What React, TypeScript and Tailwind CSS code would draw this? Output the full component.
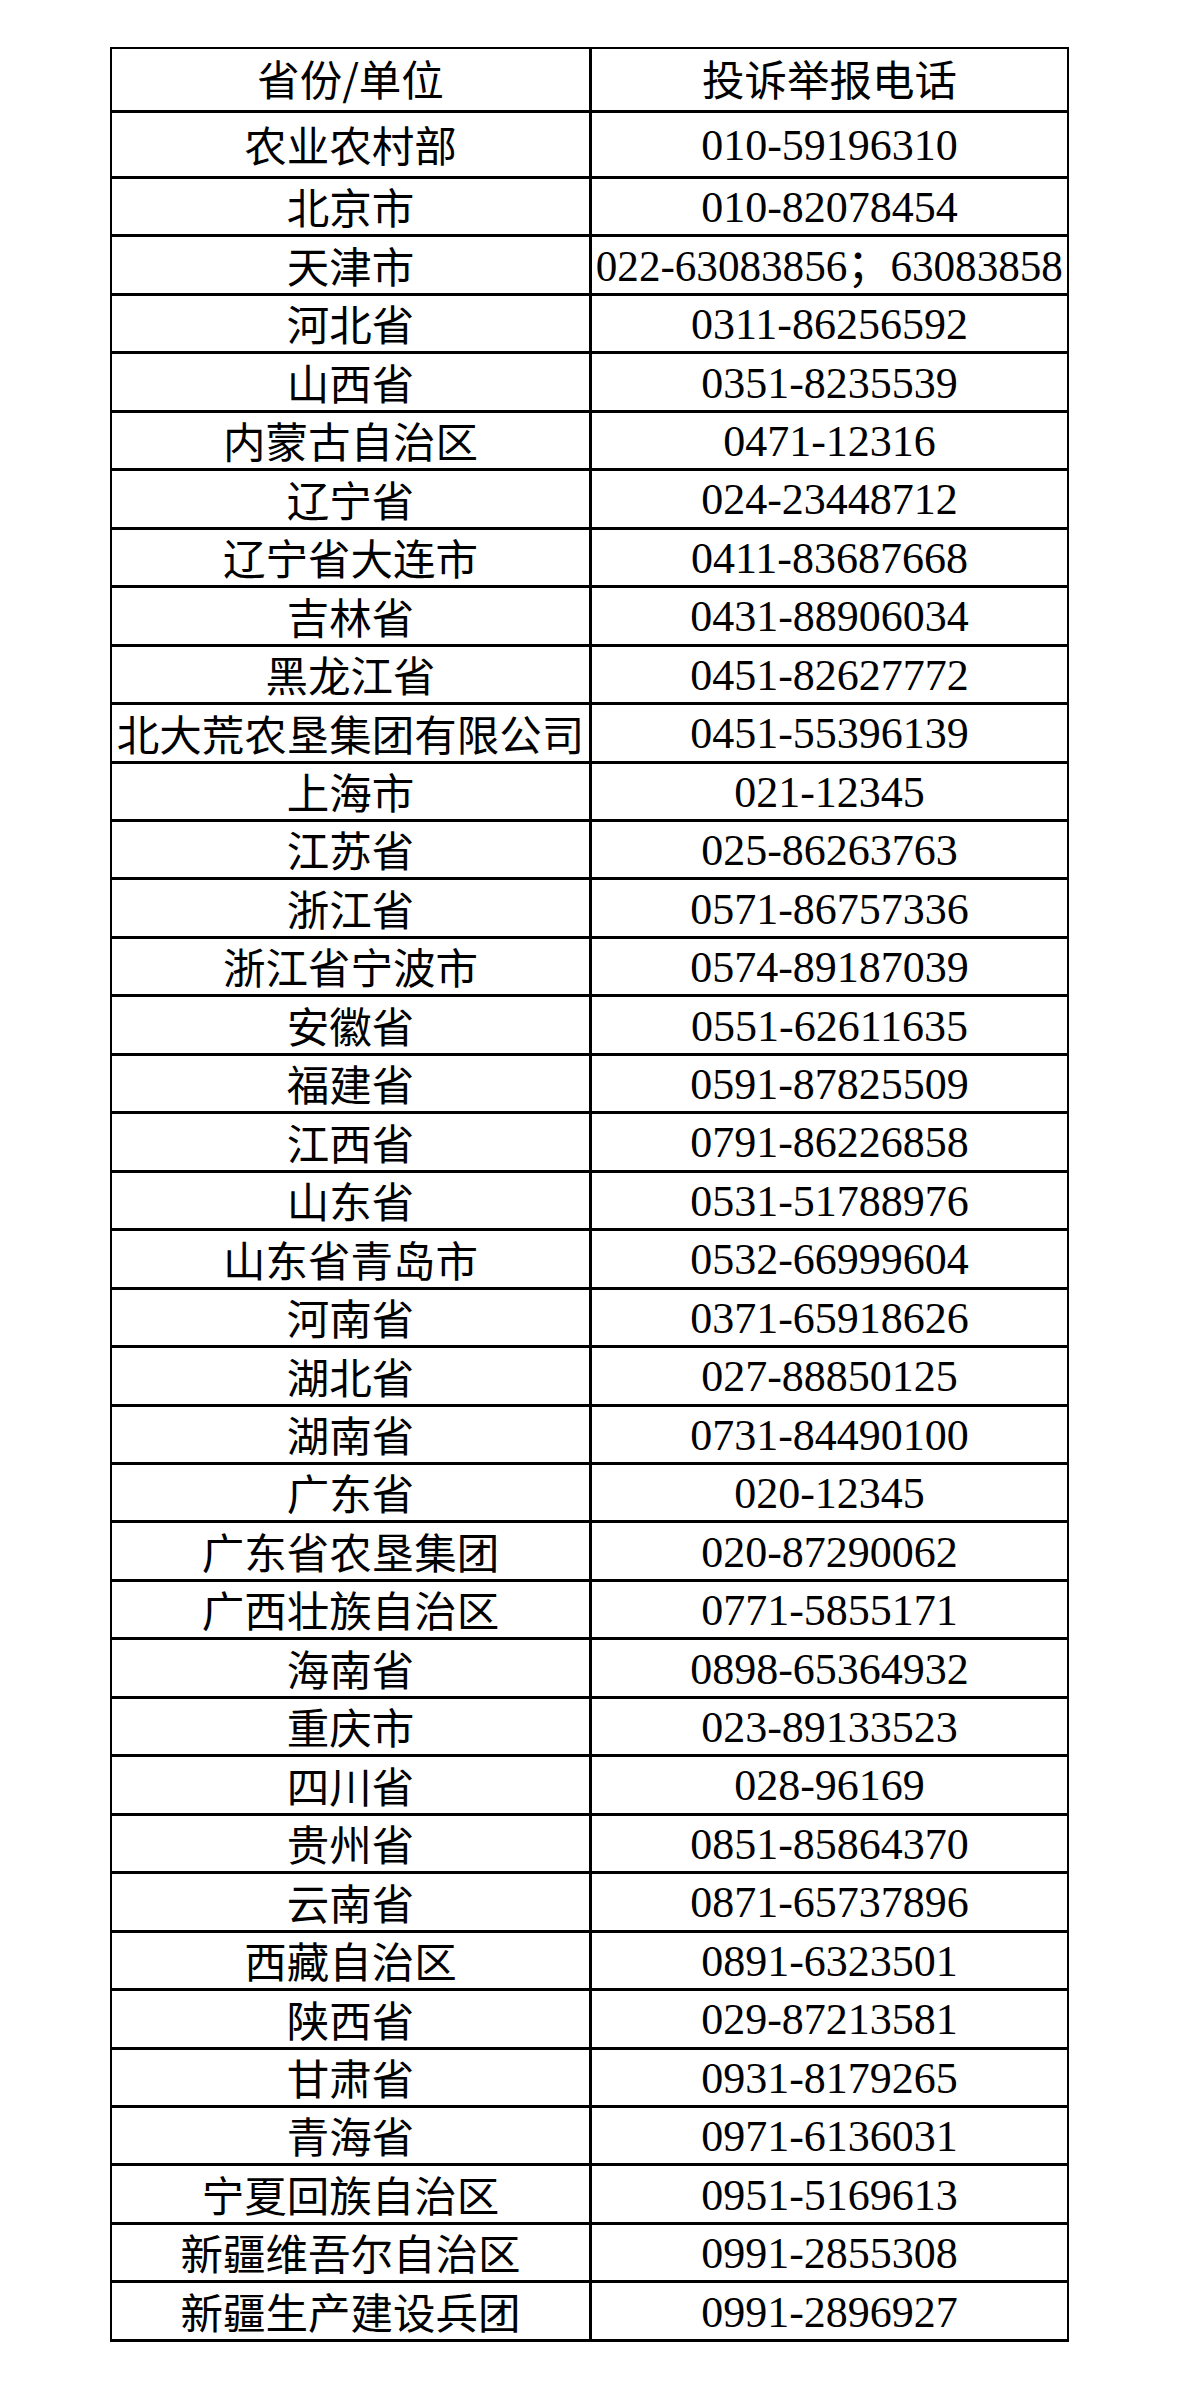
import React from "react";

const rows: [string, string][] = [
  ["农业农村部", "010-59196310"],
  ["北京市", "010-82078454"],
  ["天津市", "022-63083856；63083858"],
  ["河北省", "0311-86256592"],
  ["山西省", "0351-8235539"],
  ["内蒙古自治区", "0471-12316"],
  ["辽宁省", "024-23448712"],
  ["辽宁省大连市", "0411-83687668"],
  ["吉林省", "0431-88906034"],
  ["黑龙江省", "0451-82627772"],
  ["北大荒农垦集团有限公司", "0451-55396139"],
  ["上海市", "021-12345"],
  ["江苏省", "025-86263763"],
  ["浙江省", "0571-86757336"],
  ["浙江省宁波市", "0574-89187039"],
  ["安徽省", "0551-62611635"],
  ["福建省", "0591-87825509"],
  ["江西省", "0791-86226858"],
  ["山东省", "0531-51788976"],
  ["山东省青岛市", "0532-66999604"],
  ["河南省", "0371-65918626"],
  ["湖北省", "027-88850125"],
  ["湖南省", "0731-84490100"],
  ["广东省", "020-12345"],
  ["广东省农垦集团", "020-87290062"],
  ["广西壮族自治区", "0771-5855171"],
  ["海南省", "0898-65364932"],
  ["重庆市", "023-89133523"],
  ["四川省", "028-96169"],
  ["贵州省", "0851-85864370"],
  ["云南省", "0871-65737896"],
  ["西藏自治区", "0891-6323501"],
  ["陕西省", "029-87213581"],
  ["甘肃省", "0931-8179265"],
  ["青海省", "0971-6136031"],
  ["宁夏回族自治区", "0951-5169613"],
  ["新疆维吾尔自治区", "0991-2855308"],
  ["新疆生产建设兵团", "0991-2896927"],
];

const cjk = "font-['Noto_Sans_CJK_SC',sans-serif] text-[42.5px] leading-none";
const num = "font-['Liberation_Serif','Noto_Sans_CJK_SC',serif] text-[44px] leading-none";

export default function App() {
  return (
    <div className="w-[1179px] h-[2391px] bg-white pt-[47px] pl-[110px] text-black">
      <div className="w-[959px] border-t-2 border-x-2 border-black">
        {/* header */}
        <div className="flex h-[64px] border-b-[3px] border-black">
          <div className={`flex w-[480px] shrink-0 items-center justify-center border-r-[3px] border-black pb-[2px] ${cjk}`}>
            省份/单位
          </div>
          <div className={`flex min-w-0 flex-1 items-center justify-center pb-[2px] ${cjk}`}>
            投诉举报电话
          </div>
        </div>

        {rows.map(([name, phone], i) => (
          <div
            key={name}
            className={`flex border-b-[3px] border-black ${i === 0 ? "h-[66px]" : "h-[58.46px]"}`}
          >
            <div
              className={`flex w-[480px] shrink-0 items-center justify-center whitespace-nowrap border-r-[3px] border-black ${cjk}`}
            >
              {name}
            </div>
            <div className={`flex min-w-0 flex-1 items-center justify-center whitespace-nowrap pt-[3px] ${num}`}>
              {phone.includes("；") ? (
                <span className="inline-block shrink-0 scale-x-[0.98]">{phone}</span>
              ) : (
                phone
              )}
            </div>
          </div>
        ))}
      </div>
    </div>
  );
}
